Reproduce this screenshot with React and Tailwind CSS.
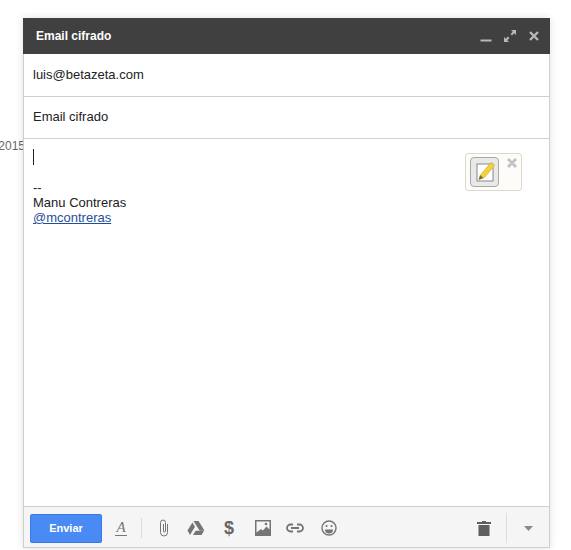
function ToolIcon({ children, className = "" }) {
  return <div className={`flex items-center justify-center ${className}`}>{children}</div>;
}

export default function App() {
  return (
    <div className="w-[571px] h-[550px] overflow-hidden bg-white flex font-['Liberation_Sans',Arial,sans-serif]">
      {/* trozo de la lista de correos que queda detrás */}
      <div className="w-[23px] shrink-0 pt-[139px] overflow-hidden flex justify-end">
        <span className="text-[12px] leading-[14px] text-[#666] mr-[-2px]">/2015</span>
      </div>

      <div className="mt-[18px] w-[527px] h-[530px] flex flex-col bg-white border-x border-b border-[#cfcfcf] shadow-[0_0_8px_rgba(0,0,0,0.12)]">
        <div className="-mx-px h-[36px] shrink-0 bg-[#404040] flex items-center pl-[13px] pr-[9px]">
          <span className="text-[12px] font-bold text-white flex-1">Email cifrado</span>
          <div className="flex items-center gap-[10px] text-[#b8b8b8]">
            <svg width="14" height="14" viewBox="0 0 14 14">
              <rect x="1.500" y="10.500" width="11" height="2" fill="currentColor" />
            </svg>
            <svg width="14" height="14" viewBox="0 0 14 14" fill="currentColor">
              <path d="M8 1h5v5l-1.800-1.800L9 6.400 7.600 5l2.200-2.200zM6 13H1V8l1.800 1.800L5 7.600 6.400 9l-2.200 2.200z" />
            </svg>
            <svg width="14" height="14" viewBox="0 0 14 14">
              <path d="M3 3l8 8M11 3l-8 8" stroke="currentColor" strokeWidth="2.400" />
            </svg>
          </div>
        </div>

        <div className="h-[43px] shrink-0 border-b border-[#cfcfcf] flex items-center pl-[9px] text-[13px] text-[#222]">
          luis@betazeta.com
        </div>
        <div className="h-[42px] shrink-0 border-b border-[#cfcfcf] flex items-center pl-[9px] pb-[2px] text-[13px] text-[#222]">
          Email cifrado
        </div>

        <div className="relative flex-1 pl-[9px] pt-[10px] text-[13px] leading-[15px] text-[#222]">
          <div className="w-px h-[16px] bg-[#222]" />
          <div className="mt-[15px]">--</div>
          <div>Manu Contreras</div>
          <a className="text-[#1f4f9c] underline">@mcontreras</a>

          {/* aviso de la extensión, flota sobre el texto */}
          <div className="absolute left-[441px] top-[14px] w-[57px] h-[38px] bg-[#fdfcf9] border border-[#ddd8cc] rounded-[3px] flex items-center pl-[4px]">
            <div className="w-[29px] h-[30px] rounded-[4px] border border-[#a8a8a8] bg-[#e9e9e9] flex items-center justify-center">
              <svg width="24" height="24" viewBox="0 0 24 24">
                <rect x="4" y="4" width="16" height="17" fill="#fff" stroke="#888" strokeWidth="1" />
                <path d="M8 14.500 18 2.500l3.500 3-10 12-4.500 1.500z" fill="#f2d33c" stroke="#d4b02a" strokeWidth="0.700" />
                <path d="M5.500 20l1.500-5 3.500 3z" fill="#7a6a35" />
              </svg>
            </div>
            <svg width="12" height="12" viewBox="0 0 12 12" className="self-start mt-[3px] ml-[7px]">
              <path d="M2 2l8 8M10 2l-8 8" stroke="#c4c4c4" strokeWidth="3" />
            </svg>
          </div>
        </div>

        <div className="h-[41px] shrink-0 bg-[#f5f5f5] border-t border-[#cfcfcf] flex items-center pl-[6px] pt-[2px] pr-[17px] text-[#757575]">
          <button className="w-[72px] h-[29px] rounded-[2px] bg-[#4a8af4] border border-[#3b78e7] text-white text-[11px] font-bold">
            Enviar
          </button>
          <ToolIcon className="w-[16px] ml-[11px]">
            <svg width="14" height="18" viewBox="0 0 14 18">
              <text x="7" y="13" textAnchor="middle" fontFamily="'Liberation Serif',serif" fontStyle="italic" fontSize="15" fill="currentColor">A</text>
              <rect x="1" y="16" width="12" height="1" fill="currentColor" />
            </svg>
          </ToolIcon>
          <div className="w-px h-[20px] bg-[#ddd] ml-[12px]" />
          <ToolIcon className="w-[12px] ml-[16px]">
            <svg width="12" height="18" viewBox="0 0 12 18" fill="none" stroke="currentColor" strokeWidth="1">
              <path d="M9.500 5v8.500a3.500 3.500 0 0 1-7 0V3.500a2.500 2.500 0 0 1 5 0V12a1 1 0 0 1-2 0V5" />
            </svg>
          </ToolIcon>
          <ToolIcon className="w-[18px] ml-[17px]">
            <svg width="18" height="16" viewBox="0 0 18 16" fill="currentColor">
              <path d="M6.500 1h5l6 9.500h-5zM5.400 2.500 8 6.800 3 15 .5 10.500zM6 15l2.600-4.200H17L14.500 15z" />
            </svg>
          </ToolIcon>
          <ToolIcon className="w-[14px] ml-[17px]">
            <span className="text-[18px] leading-[18px] font-bold text-[#666]">$</span>
          </ToolIcon>
          <ToolIcon className="w-[16px] ml-[19px]">
            <svg width="16" height="16" viewBox="0 0 16 16">
              <path d="M0 0h16v16H0z" fill="currentColor" />
              <path d="M1.500 1.500h13v8l-3-3-3.500 4-2-1.500-4.500 3.500z" fill="#f5f5f5" />
              <circle cx="11" cy="4" r="1.300" fill="currentColor" />
            </svg>
          </ToolIcon>
          <ToolIcon className="w-[18px] ml-[15px]">
            <svg width="18" height="10" viewBox="0 0 18 10" fill="none" stroke="currentColor" strokeWidth="1.800">
              <path d="M7 1.500H4.500a3.500 3.500 0 0 0 0 7H7M11 1.500h2.500a3.500 3.500 0 0 1 0 7H11M5 5h8" />
            </svg>
          </ToolIcon>
          <ToolIcon className="w-[16px] ml-[17px]">
            <svg width="16" height="16" viewBox="0 0 16 16" fill="none" stroke="currentColor">
              <circle cx="8" cy="8" r="7" strokeWidth="1.400" />
              <circle cx="5.500" cy="6" r="1.100" fill="currentColor" stroke="none" />
              <circle cx="10.500" cy="6" r="1.100" fill="currentColor" stroke="none" />
              <path d="M4 9.500h8a4 4 0 0 1-8 0z" fill="currentColor" stroke="none" />
            </svg>
          </ToolIcon>
          <div className="flex-1" />
          <ToolIcon className="w-[14px]">
            <svg width="14" height="16" viewBox="0 0 14 16" fill="#5f5f5f">
              <path d="M0 2h5V1h4v1h5v2H0zM1.500 5h11v11h-11z" />
            </svg>
          </ToolIcon>
          <div className="w-px h-[30px] bg-[#ddd] ml-[15px]" />
          <ToolIcon className="w-[9px] ml-[17px] mr-[-1px]">
            <svg width="9" height="5" viewBox="0 0 9 5">
              <path d="M0 0h9L4.500 5z" fill="#8a8a8a" />
            </svg>
          </ToolIcon>
        </div>
      </div>
    </div>
  );
}
